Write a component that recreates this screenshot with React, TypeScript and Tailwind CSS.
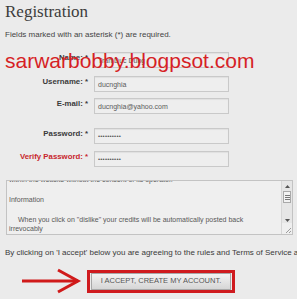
import React from "react";

const sans = { fontFamily: '"Liberation Sans", Arial, sans-serif' } as const;

function Row({
  label,
  red,
  value,
  dots,
  className,
}: {
  label: string;
  red?: boolean;
  value?: string;
  dots?: boolean;
  className?: string;
}) {
  return (
    <div className={"flex items-start gap-[6px] " + (className ?? "")}>
      <div
        className={
          "w-[83px] text-right text-[7.8px] leading-[10px] font-bold whitespace-nowrap pt-[1px] " +
          (red ? "text-[#c8262b]" : "text-[#3a3a3a]")
        }
      >
        {label}
      </div>
      <div className="w-[135px] h-[16px] border border-[#c9c9c9] bg-[#eeeeee] flex items-center pl-[3px] shadow-[inset_0_1px_1px_rgba(0,0,0,0.06)]">
        {dots ? (
          <span className="text-[6px] leading-none text-[#555] tracking-[0.2px]">••••••••••</span>
        ) : (
          <span className="text-[7px] leading-none text-[#5a5a5a]">{value}</span>
        )}
      </div>
    </div>
  );
}

export default function App() {
  return (
    <div
      className="relative w-[297px] h-[299px] overflow-hidden bg-[#ebebeb] px-[5px] pt-[3px]"
      style={sans}
    >
      <div
        className="text-[17px] leading-[17px] text-[#3c3c3c]"
        style={{ fontFamily: '"Liberation Serif", "Times New Roman", serif' }}
      >
        Registration
      </div>
      <div className="mt-[10px] text-[8px] leading-[10px] text-[#444] whitespace-nowrap">
        Fields marked with an asterisk (*) are required.
      </div>

      <div className="mt-[12px] flex flex-col">
        <Row label="Name: *" value="Tran Duc Dung" />
        <Row label="Username: *" value="ducnghia" className="mt-[8px]" />
        <Row label="E-mail: *" value="ducnghia@yahoo.com" className="mt-[6px]" />
        <Row label="Password: *" dots className="mt-[14px]" />
        <Row label="Verify Password: *" red dots className="mt-[7px]" />
      </div>

      <div className="mt-[13px] ml-[1px] w-[287px] h-[55px] border border-[#c3c3c3] bg-[#efefef] flex">
        <div className="flex-1 overflow-hidden text-[7px] leading-[10px] text-[#585858] pl-[2px]">
          <div className="-mt-[6px] whitespace-nowrap">
            within the website without the consent of its operator.
          </div>
          <div className="h-[10px]" />
          <div>Information</div>
          <div className="h-[10px]" />
          <div className="pl-[9px] whitespace-nowrap">
            When you click on "dislike" your credits will be automatically posted back
          </div>
          <div className="-mt-[1px]">irrevocably</div>
        </div>
        <div className="w-[11px] flex flex-col border-l border-[#d6d6d6] bg-[#e6e6e6]">
          <div className="h-[10px] flex items-center justify-center">
            <svg width="5" height="3" viewBox="0 0 5 3">
              <path d="M0 3 L2.5 0 L5 3 Z" fill="#555" />
            </svg>
          </div>
          <div className="mx-[1px] h-[12px] border border-[#a9a9a9] bg-[#f2f2f2] flex flex-col items-center justify-center gap-[1px]">
            <div className="w-[5px] h-px bg-[#777]" />
            <div className="w-[5px] h-px bg-[#777]" />
            <div className="w-[5px] h-px bg-[#777]" />
          </div>
          <div className="h-[14px]" />
          <div className="h-[6px] flex items-center justify-center">
            <svg width="5" height="3" viewBox="0 0 5 3">
              <path d="M0 0 L2.5 3 L5 0 Z" fill="#555" />
            </svg>
          </div>
          <div className="flex-1 flex items-end justify-end bg-[#efefef]">
            <svg width="7" height="7" viewBox="0 0 7 7">
              <path d="M6 1 L1 6 M6 4 L4 6" stroke="#888" strokeWidth="0.8" />
            </svg>
          </div>
        </div>
      </div>

      <div className="mt-[13px] text-[8px] leading-[10px] text-[#3a3a3a] whitespace-nowrap">
        By clicking on 'I accept' below you are agreeing to the rules and Terms of Service above.
      </div>

      <div className="mt-[10px] flex items-center">
        <svg width="62" height="26" viewBox="0 0 62 26" className="ml-[15px]">
          <path d="M2 13 L58 13" stroke="#d01a1a" strokeWidth="3" />
          <path d="M38 2 L58 13 L38 24" stroke="#d01a1a" strokeWidth="3" fill="none" strokeLinejoin="miter" />
        </svg>
        <div className="ml-[5px] border-[3px] border-[#cf1b1f] px-[1px] bg-[#ebebeb]">
          <div className="w-[140px] h-[17px] border border-[#a8a8a8] bg-gradient-to-b from-[#f3f3f3] to-[#d6d6d6] flex items-center justify-center text-[7.5px] text-[#555] whitespace-nowrap">
            I ACCEPT, CREATE MY ACCOUNT.
          </div>
        </div>
      </div>

      <div
        className="absolute left-[5px] top-[50px] text-[21px] leading-[21px] text-[#d61f26] whitespace-nowrap"
      >
        sarwarbobby.blogpsot.com
      </div>
    </div>
  );
}
